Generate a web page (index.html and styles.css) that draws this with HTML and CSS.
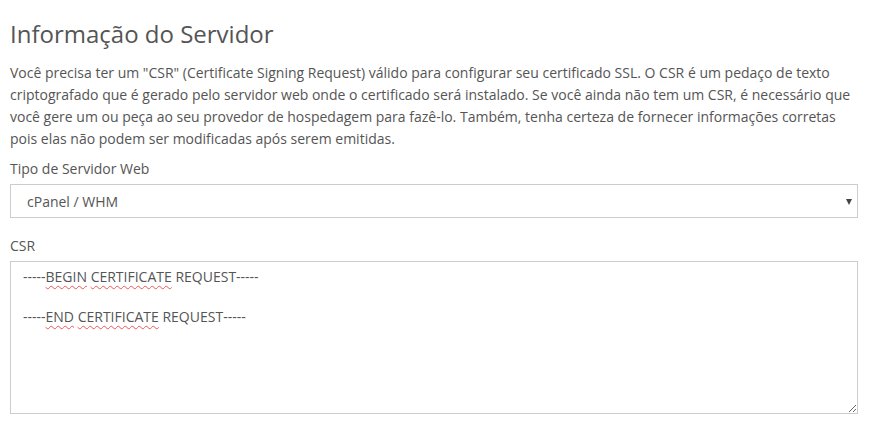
FILE: index.html
```html
<!DOCTYPE html>
<html lang="pt">
<head>
<meta charset="utf-8">
<link rel="stylesheet" href="styles.css">
</head>
<body>
<div class="page">
  <h2 class="title">Informação do Servidor</h2>
  <p class="intro">Você precisa ter um "CSR" (Certificate Signing Request) válido para configurar seu certificado SSL. O CSR é um pedaço de texto criptografado que é gerado pelo servidor web onde o certificado será instalado. Se você ainda não tem um CSR, é necessário que você gere um ou peça ao seu provedor de hospedagem para fazê-lo. Também, tenha certeza de fornecer informações corretas pois elas não podem ser modificadas após serem emitidas.</p>
  <div class="field">
    <label class="label">Tipo de Servidor Web</label>
    <div class="select">
      <span class="select-value">cPanel / WHM</span>
    </div>
  </div>
  <div class="field">
    <label class="label">CSR</label>
    <div class="textarea">
      <div class="line">-----<span class="sp">BEGIN</span> <span class="sp">CERTIFICATE</span> REQUEST-----</div>
      <div class="line">&nbsp;</div>
      <div class="line">-----<span class="sp">END</span> <span class="sp">CERTIFICATE</span> REQUEST-----</div>
    </div>
  </div>
</div>
</body>
</html>
```
FILE: styles.css
```css
html, body {
  margin: 0;
  padding: 0;
  background: #fff;
}
body {
  font-family: "Open Sans", "Liberation Sans", sans-serif;
  color: #555;
}
.page {
  width: 848px;
  margin-left: 10px;
  padding-top: 14px;
}
.title {
  margin: 0 0 8px;
  font-size: 24px;
  font-weight: 400;
  line-height: 40px;
  color: #555;
}
.intro {
  margin: 0 0 8px;
  font-size: 14px;
  line-height: 22px;
}
.field {
  display: flex;
  flex-direction: column;
}
.label {
  font-size: 14px;
  line-height: 22px;
  margin-bottom: 4px;
}
.select {
  position: relative;
  height: 34px;
  box-sizing: border-box;
  border: 1px solid #ccc;
  display: flex;
  align-items: center;
  padding-left: 16px;
  font-size: 14px;
  color: #555;
  margin-bottom: 17px;
}
.select::after {
  content: "";
  position: absolute;
  right: 5px;
  top: 14px;
  border-left: 3.5px solid transparent;
  border-right: 3.5px solid transparent;
  border-top: 6px solid #444;
}
.textarea {
  height: 153px;
  box-sizing: border-box;
  border: 1px solid #ccc;
  padding: 5px 12px;
  font-size: 14px;
  line-height: 20px;
  color: #555;
  overflow: auto;
  resize: vertical;
}
.sp {
  text-decoration: underline wavy #e55;
  text-decoration-thickness: 1px;
  text-underline-offset: 3px;
}
```
